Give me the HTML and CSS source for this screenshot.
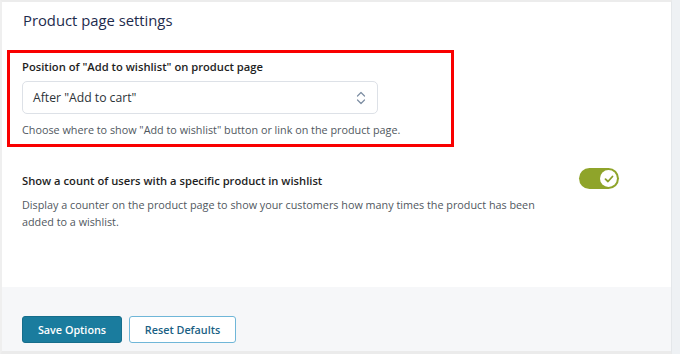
FILE: index.html
```html
<!DOCTYPE html>
<html lang="en">
  <head>
    <meta charset="UTF-8" />
    <meta name="viewport" content="width=device-width, initial-scale=1.0" />
    <title>Product page settings</title>
    <link rel="stylesheet" href="styles.css">
  </head>
  <body>
    <div class="panel">
      <div class="panel-body">
        <h2 class="panel-title">Product page settings</h2>
        <section class="option highlight">
          <label class="option-label" for="position">Position of "Add to wishlist" on product page</label>
          <div class="select">
            <span>After "Add to cart"</span>
            <svg width="10" height="14" viewBox="0 0 10 14">
              <path d="M1.5 5 L5 1.5 L8.5 5 M1.5 9 L5 12.5 L8.5 9" fill="none" stroke="#7d8ea3" stroke-width="1.2" stroke-linecap="round" stroke-linejoin="round" />
            </svg>
          </div>
          <p class="option-help">Choose where to show "Add to wishlist" button or link on the product page.</p>
        </section>
        <section class="option option-row">
          <div class="option-text">
            <div class="option-label">Show a count of users with a specific product in wishlist</div>
            <p class="option-desc">Display a counter on the product page to show your customers how many times the product has been added to a wishlist.</p>
          </div>
          <div class="toggle">
            <span class="knob">
              <svg width="10" height="8" viewBox="0 0 10 8">
                <path d="M1.5 4.2 L4 6.5 L8.5 1.5" fill="none" stroke="#8a9e2a" stroke-width="1.8" stroke-linecap="round" stroke-linejoin="round" />
              </svg>
            </span>
          </div>
        </section>
      </div>
      <footer class="panel-footer">
        <button class="btn btn-primary">Save Options</button>
        <button class="btn btn-secondary">Reset Defaults</button>
      </footer>
    </div>
  </body>
</html>
```

FILE: styles.css
```css
body {
  font-family: "Open Sans", "Noto Sans", sans-serif;
  margin: 0;
  padding: 0;
  background: #eef1f4;
  height: 354px;
  overflow: hidden;
}
.panel {
  margin: 0 8px 0 0;
  border-top: 2px solid #ececec;
  border-left: 2px solid #efefef;
  border-right: 1px solid #e4e7ea;
  border-bottom: 4px solid #ebebeb;
  background: #fff;
}
.panel-body {
  padding: 0 0 57px 5px;
}
.panel-title {
  margin: 0;
  padding: 7px 0 0 16px;
  height: 48px;
  box-sizing: border-box;
  font-size: 14.8px;
  font-weight: 500;
  color: #1d2b4d;
  line-height: 22px;
}
.option-label {
  display: block;
  font-size: 11.2px;
  font-weight: 600;
  color: #1e1e1e;
  line-height: 18px;
}
.highlight {
  width: 447px;
  box-sizing: border-box;
  border: 3px solid #f90000;
  padding: 5px 12px 6px;
}
.select {
  margin-top: 5px;
  width: 356px;
  height: 33px;
  box-sizing: border-box;
  border: 1px solid #dde1e7;
  border-radius: 5px;
  display: flex;
  align-items: center;
  justify-content: space-between;
  padding: 0 11px 0 10px;
  font-size: 12.2px;
  color: #2c3338;
}
.select svg {
  margin-top: 1px;
}
.option-help,
.option-desc {
  margin: 0;
  font-size: 10.8px;
  color: #50575e;
  line-height: 17px;
}
.option-help {
  margin-top: 7px;
}
.option-row {
  display: flex;
  align-items: flex-start;
  gap: 27px;
  padding: 25px 0 0 15px;
}
.option-text {
  width: 530px;
}
.option-row .option-label {
  margin-bottom: 6px;
}
.toggle {
  margin-top: -4px;
  width: 40px;
  height: 21px;
  border-radius: 11px;
  background: #8fa42a;
  display: flex;
  align-items: center;
  justify-content: flex-end;
  padding: 0 2px;
  box-sizing: border-box;
}
.knob {
  width: 17px;
  height: 17px;
  border-radius: 50%;
  background: #fff;
  display: flex;
  align-items: center;
  justify-content: center;
}
.panel-footer {
  background: #f6f7f9;
  height: 64px;
  box-sizing: border-box;
  padding: 29px 0 0 20px;
  display: flex;
  gap: 7px;
  align-items: flex-start;
}
.btn {
  height: 27px;
  font-family: "Open Sans", "Noto Sans", sans-serif;
  font-size: 10.8px;
  font-weight: 600;
  border-radius: 3px;
  cursor: pointer;
  padding: 0;
}
.btn-primary {
  width: 100px;
  background: #1a7c9e;
  border: 1px solid #166d8b;
  color: #fff;
}
.btn-secondary {
  width: 107px;
  background: #fff;
  border: 1px solid #6fb6d8;
  color: #1a5f84;
}
```
